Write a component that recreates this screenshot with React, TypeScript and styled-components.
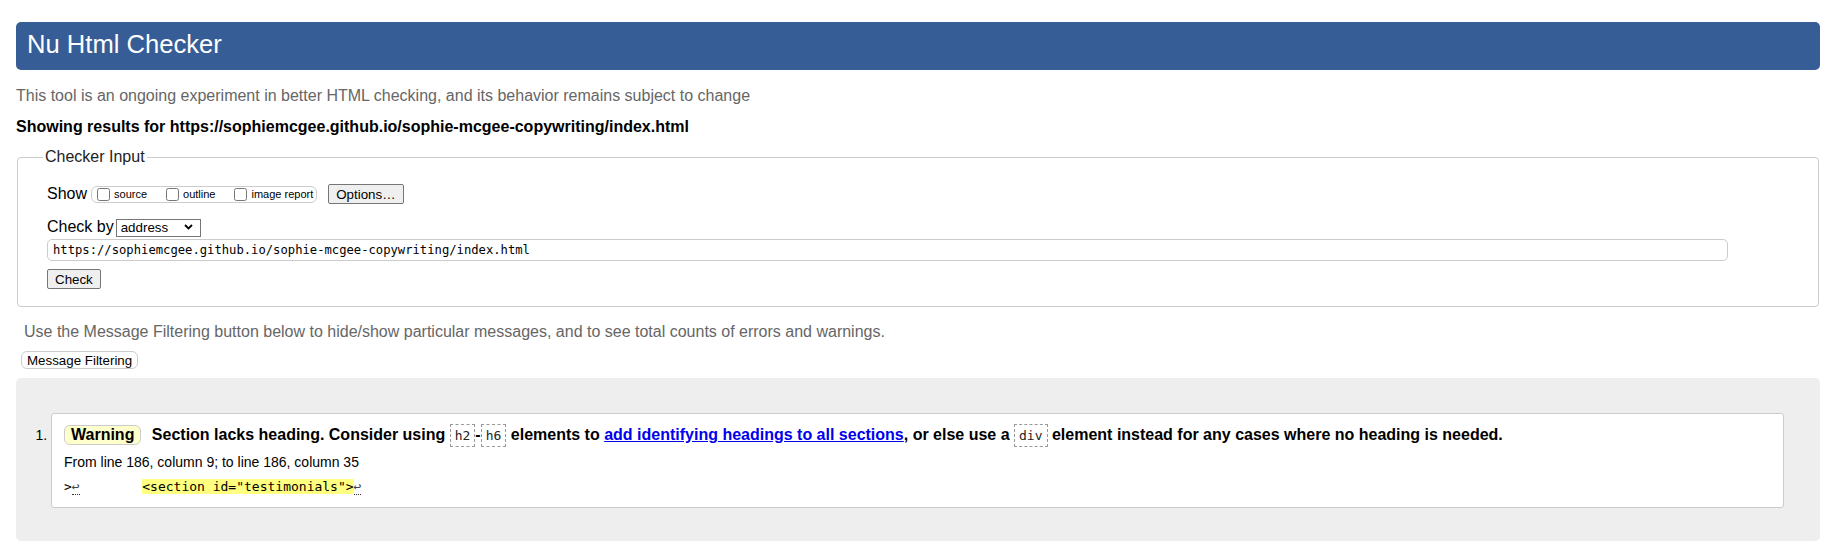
import React from "react";
import styled, { createGlobalStyle } from "styled-components";

const GlobalStyle = createGlobalStyle`
  html, body { margin: 0; padding: 0; background: #fff; }
  body { font-family: "Liberation Sans", Arial, sans-serif; color: #000; }
`;

const MONO = `"DejaVu Sans Mono", "Liberation Mono", monospace`;

const Page = styled.div`
  padding: 22px 23px 13px 16px;
`;

const Header = styled.h1`
  margin: 0;
  height: 48px;
  background: #365d95;
  border-radius: 5px;
  color: #fff;
  font-size: 25.6px;
  font-weight: 400;
  line-height: 44px;
  padding: 0 11px;
`;

const Intro = styled.p`
  margin: 17px 0 0;
  font-size: 16px;
  line-height: 18px;
  color: #666;
`;

const ResultsFor = styled.p`
  margin: 13px 0 0;
  font-size: 16px;
  line-height: 18px;
  font-weight: 700;
`;

const Fieldset = styled.fieldset`
  margin: 12px 1px 0;
  border: 1px solid #ccc;
  border-radius: 4px;
  padding: 0 90px 17px 29px;
  min-width: 0;
`;

const Legend = styled.legend`
  margin-left: -4px;
  padding: 0 2px;
  font-size: 16px;
  line-height: 18px;
  color: #222;
`;

const ShowRow = styled.div`
  display: flex;
  align-items: center;
  height: 20px;
  margin-top: 18px;
  font-size: 16px;
`;

const RowLabel = styled.span<{ $gap: number }>`
  font-size: 16px;
  line-height: 18px;
  margin-right: ${(p) => p.$gap}px;
`;

const OptionGroup = styled.span`
  display: inline-flex;
  align-items: center;
  box-sizing: border-box;
  height: 17px;
  border: 1px solid #ccc;
  border-radius: 6px;
  padding: 0 3px 0 1px;
`;

const OptionLabel = styled.label<{ $last?: boolean }>`
  display: inline-flex;
  align-items: center;
  font-size: 11px;
  line-height: 13px;
  margin-right: ${(p) => (p.$last ? 0 : 15)}px;
`;

const CheckBox = styled.input`
  width: 13px;
  height: 13px;
  margin: 0 4px 0 4px;
`;

const GrayButton = styled.button<{ $ml?: number }>`
  box-sizing: border-box;
  height: 20px;
  margin: 0 0 0 ${(p) => p.$ml ?? 0}px;
  padding: 0 7px;
  font-family: "Liberation Sans", Arial, sans-serif;
  font-size: 13.33px;
  color: #000;
  background: #efefef;
  border: 1px solid #767676;
  border-radius: 2px;
`;

const CheckByRow = styled.div`
  display: flex;
  align-items: center;
  height: 18px;
  margin-top: 14px;
`;

const SelectWrap = styled.span`
  position: relative;
  display: inline-block;
  height: 18px;
`;

const Select = styled.select`
  appearance: none;
  box-sizing: border-box;
  width: 85px;
  height: 18px;
  margin: 0;
  padding: 0 0 0 4px;
  font-family: "Liberation Sans", Arial, sans-serif;
  font-size: 13.33px;
  color: #000;
  background: #fff;
  border: 1px solid #767676;
  border-radius: 0;
`;

const Chevron = styled.svg`
  position: absolute;
  right: 8px;
  top: 6px;
  pointer-events: none;
`;

const UrlInput = styled.input`
  display: block;
  box-sizing: border-box;
  width: 100%;
  height: 22px;
  margin: 3px 0 0;
  padding: 0 5px;
  font-family: ${MONO};
  font-size: 12.2px;
  color: #000;
  border: 1px solid #ccc;
  border-radius: 5px;
`;

const SubmitRow = styled.div`
  margin-top: 8px;
  height: 20px;
`;

const FilterNote = styled.p`
  margin: 16px 0 0 8px;
  font-size: 16px;
  line-height: 18px;
  color: #666;
`;

const FilterButton = styled.button`
  display: block;
  box-sizing: border-box;
  height: 18px;
  margin: 10px 0 0 5px;
  padding: 0 5px;
  font-family: "Liberation Sans", Arial, sans-serif;
  font-size: 13.33px;
  color: #000;
  background: #fff;
  border: 1px solid #ccc;
  border-radius: 6px;
`;

const Results = styled.div`
  margin-top: 9px;
  background: #eee;
  border-radius: 5px;
  padding: 35px 36px 33px 0;
`;

const List = styled.ol`
  margin: 0;
  padding: 0 0 0 35px;
`;

const Item = styled.li`
  font-size: 14px;
  background: #fff;
  border: 1px solid #ccc;
  border-radius: 3px;
  padding: 11px 12px 12px 12px;
`;

const Message = styled.p`
  margin: 0;
  font-size: 16px;
  font-weight: 700;
  line-height: 20px;
`;

const Badge = styled.strong`
  display: inline-block;
  box-sizing: border-box;
  height: 20px;
  line-height: 18px;
  padding: 0 6px;
  margin-right: 6px;
  background: #ffffcc;
  border: 1px solid #ccc;
  border-radius: 6px;
  vertical-align: top;
`;

const Code = styled.code`
  font-family: ${MONO};
  font-size: 13px;
  font-weight: 400;
  color: #222;
  padding: 3px 4px;
  border: 1px dashed #999;
`;

const Link = styled.a`
  color: #0000ee;
  text-decoration: underline;
`;

const Location = styled.p`
  margin: 8px 0 0;
  font-size: 14px;
  line-height: 16px;
`;

const Extract = styled.p`
  margin: 9px 0 0;
  font-family: ${MONO};
  font-size: 13px;
  line-height: 16px;
  white-space: pre;
  color: #000;
`;

const LineBreak = styled.b`
  font-weight: 400;
  color: #444;
  border-bottom: 1px dotted #333;
`;

const Highlight = styled.mark`
  background: #ffff80;
  color: #000;
`;

export default function App() {
  const url = "https://sophiemcgee.github.io/sophie-mcgee-copywriting/index.html";
  return (
    <Page>
      <GlobalStyle />
      <Header>Nu Html Checker</Header>
      <Intro>
        This tool is an ongoing experiment in better HTML checking, and its behavior remains subject to change
      </Intro>
      <ResultsFor>Showing results for {url}</ResultsFor>

      <Fieldset>
        <Legend>Checker Input</Legend>
        <ShowRow>
          <RowLabel $gap={4}>Show</RowLabel>
          <OptionGroup>
            <OptionLabel>
              <CheckBox type="checkbox" />
              source
            </OptionLabel>
            <OptionLabel>
              <CheckBox type="checkbox" />
              outline
            </OptionLabel>
            <OptionLabel $last>
              <CheckBox type="checkbox" />
              image report
            </OptionLabel>
          </OptionGroup>
          <GrayButton type="button" $ml={11}>
            Options…
          </GrayButton>
        </ShowRow>
        <CheckByRow>
          <RowLabel $gap={2}>Check by</RowLabel>
          <SelectWrap>
            <Select defaultValue="address">
              <option value="address">address</option>
              <option value="file">file upload</option>
              <option value="text">text input</option>
            </Select>
            <Chevron width="9" height="6" viewBox="0 0 9 6">
              <path d="M1 1 L4.5 4.5 L8 1" fill="none" stroke="#000" strokeWidth="1.8" />
            </Chevron>
          </SelectWrap>
        </CheckByRow>
        <UrlInput type="url" defaultValue={url} />
        <SubmitRow>
          <GrayButton type="button">Check</GrayButton>
        </SubmitRow>
      </Fieldset>

      <FilterNote>
        Use the Message Filtering button below to hide/show particular messages, and to see total counts of errors and warnings.
      </FilterNote>
      <FilterButton type="button">Message Filtering</FilterButton>

      <Results>
        <List>
          <Item>
            <Message>
              <Badge>Warning</Badge> Section lacks heading. Consider using <Code>h2</Code>-<Code>h6</Code> elements to{" "}
              <Link href="#">add identifying headings to all sections</Link>, or else use a <Code>div</Code> element
              instead for any cases where no heading is needed.
            </Message>
            <Location>From line 186, column 9; to line 186, column 35</Location>
            <Extract>
              {">"}
              <LineBreak>↩</LineBreak>
              {"        "}
              <Highlight>{'<section id="testimonials">'}</Highlight>
              <LineBreak>↩</LineBreak>
            </Extract>
          </Item>
        </List>
      </Results>
    </Page>
  );
}
